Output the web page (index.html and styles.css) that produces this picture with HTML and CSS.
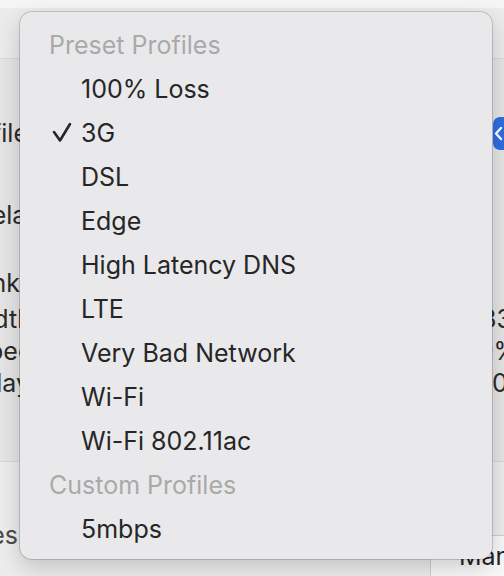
FILE: index.html
```html
<!DOCTYPE html>
<html>
  <head>
    <title>Network Link Conditioner</title>
    <meta charset="UTF-8">
    <meta name="viewport" content="width=device-width, initial-scale=1.0">
    <link rel="stylesheet" href="styles.css">
  </head>
  <body>
    <div class="window">
      <div class="toolbar"></div>

      <div class="content">
        <div class="row profile-row">
          <span class="label">Profile</span>
          <span class="popup">
            <svg width="11" height="33" viewBox="0 0 11 33">
              <polyline points="8,11 3,16.5 8,22" fill="none" stroke="white" stroke-width="2.4" stroke-linecap="round" stroke-linejoin="round"/>
            </svg>
          </span>
        </div>
        <div class="row delay-row">
          <span class="label">Delay</span>
        </div>
        <div class="row section-row">
          <span class="label">Downlink</span>
        </div>
        <div class="row stat-row">
          <span class="label">Bandwidth</span>
          <span class="value">33 Mbps</span>
        </div>
        <div class="row stat-row">
          <span class="label">Expected</span>
          <span class="value">9%</span>
        </div>
        <div class="row stat-row">
          <span class="label">Delay</span>
          <span class="value">0 ms</span>
        </div>
      </div>

      <div class="footer">
        <span class="label">Profiles</span>
        <button class="manage">Manage</button>
      </div>
    </div>

    <!-- popup menu, drawn over the window -->
    <div class="menu">
      <div class="menu-header">Preset Profiles</div>
      <div class="menu-item">100% Loss</div>
      <div class="menu-item checked">
        <svg class="check" width="22" height="22" viewBox="0 0 22 22">
          <polyline points="3,10 9,18.5 19,2" fill="none" stroke="#262626" stroke-width="2.6" stroke-linecap="round" stroke-linejoin="round"/>
        </svg>
        3G
      </div>
      <div class="menu-item">DSL</div>
      <div class="menu-item">Edge</div>
      <div class="menu-item">High Latency DNS</div>
      <div class="menu-item">LTE</div>
      <div class="menu-item">Very Bad Network</div>
      <div class="menu-item">Wi-Fi</div>
      <div class="menu-item">Wi-Fi 802.11ac</div>
      <div class="menu-header">Custom Profiles</div>
      <div class="menu-item">5mbps</div>
    </div>
  </body>
</html>
```

FILE: styles.css
```css
html, body {
    margin: 0;
    width: 504px;
    height: 576px;
    overflow: hidden;
}
body {
    font-family: Inter, "Liberation Sans", sans-serif;
    background-color: #f5f5f5;
    color: #262626;
    position: relative;
}
.window {
    display: flex;
    flex-direction: column;
    height: 576px;
}
.toolbar {
    margin-top: 8px;
    height: 50px;
    background-color: #ebebeb;
    border-bottom: 1px solid #d9d9d9;
}
.content {
    height: 402px;
    background-color: #e4e4e4;
    border-bottom: 1px solid #d6d6d6;
    font-size: 25px;
    color: #2a2a2a;
}
.row {
    display: flex;
    align-items: center;
    justify-content: space-between;
    white-space: nowrap;
}
.label {
    width: 28px;
    display: flex;
    justify-content: flex-end;
}
.profile-row {
    margin-top: 57px;
    height: 34px;
}
.delay-row {
    margin-top: 48px;
    height: 34px;
}
.delay-row .label {
    width: 40px;
}
.section-row {
    margin-top: 34px;
    height: 34px;
}
.section-row .label {
    width: 20px;
}
.stat-row {
    height: 32px;
}
.stat-row:nth-child(4) {
    margin-top: 3px;
}
.stat-row .label {
    width: 32px;
}
.stat-row:nth-child(5) .label {
    width: 70px;
}
.stat-row:nth-child(6) .label {
    width: 30px;
}
.value {
    width: 23px;
    display: flex;
    justify-content: flex-start;
}
.stat-row:nth-child(5) .value {
    width: 26px;
}
.stat-row:nth-child(6) .value {
    width: 12px;
}
.popup {
    width: 11px;
    height: 33px;
    border-radius: 7px 0 0 7px;
    background-color: #2f6de0;
    display: flex;
}
.footer {
    flex: 1;
    background-color: #ececec;
    display: flex;
    align-items: flex-end;
    justify-content: space-between;
    font-size: 25px;
    color: #4a4a4a;
}
.footer .label {
    width: 18px;
    margin-bottom: 26px;
    overflow: hidden;
}
.manage {
    width: 90px;
    height: 42px;
    margin-right: -16px;
    margin-bottom: -1px;
    padding: 0 0 0 28px;
    text-align: left;
    font-family: Inter, "Liberation Sans", sans-serif;
    font-size: 25px;
    color: #222;
    background-color: #f8f8f8;
    border: 1px solid #cfcfcf;
    border-radius: 9px 9px 0 0;
}

.menu {
    position: absolute;
    left: 20px;
    top: 12px;
    width: 472px;
    height: 547px;
    box-sizing: border-box;
    padding-top: 11px;
    background-color: #e9e9eb;
    border-radius: 12px;
    box-shadow: 0 0 0 1px rgba(0, 0, 0, 0.16), 0 8px 22px rgba(0, 0, 0, 0.18);
    font-size: 25px;
}
.menu-header,
.menu-item {
    height: 44px;
    line-height: 44px;
}
.menu-header {
    padding-left: 29px;
    color: #a9a9a9;
}
.menu-item {
    padding-left: 61px;
    color: #262626;
    position: relative;
}
.check {
    position: absolute;
    left: 31px;
    top: 11px;
}
```
